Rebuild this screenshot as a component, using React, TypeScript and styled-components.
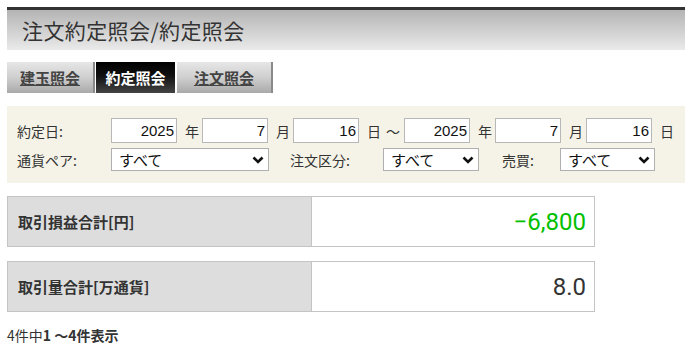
import * as React from 'react'
import styled, { createGlobalStyle } from 'styled-components'

const GlobalStyle = createGlobalStyle`
  body {
    margin: 0;
    background: #fff;
    font-family: "Liberation Sans", Arial, "Noto Sans CJK JP", sans-serif;
    color: #333;
  }
`

const Page = styled.div`
  padding: 7px 0 0 7px;
`

const Header = styled.h1`
  margin: 0;
  height: 40px;
  border-top: 3px solid #333;
  background: linear-gradient(to bottom, #b4b4b4, #eaeaea);
  padding-left: 15px;
  font-size: 21px;
  letter-spacing: 0.4px;
  font-weight: normal;
  line-height: 40px;
  color: #333;
  font-family: "Noto Sans CJK JP", sans-serif;
`

const Tabs = styled.ul`
  display: flex;
  list-style: none;
  margin: 12px 0 0;
  padding: 0;
  height: 31px;
`

const Tab = styled.li<{ active?: boolean; w: number }>`
  display: flex;
  align-items: center;
  justify-content: center;
  width: ${p => p.w}px;
  height: 31px;
  box-sizing: border-box;
  font-size: 15px;
  font-weight: bold;
  text-decoration: underline;
  font-family: "Noto Sans CJK JP", sans-serif;
  color: ${p => (p.active ? '#fff' : '#444')};
  background: ${p =>
    p.active
      ? 'linear-gradient(to bottom, #000 0%, #111 45%, #444 100%)'
      : 'linear-gradient(to bottom, #e6e6e6 0%, #cfcfcf 50%, #a9a9a9 100%)'};
  border-right: 2px solid ${p => (p.active ? '#fff' : '#8a8a8a')};
  ${p => p.active && 'text-decoration: none; border-left: 1px solid #fff;'}
`

const Filter = styled.div`
  margin-top: 13px;
  background: #f5f3e7;
  padding: 12px 0 12px 10px;
  display: flex;
  flex-direction: column;
  gap: 5px;
`

const Row = styled.div<{ h: number }>`
  display: flex;
  align-items: center;
  height: ${p => p.h}px;
`

const Label = styled.span<{ w: number }>`
  flex: none;
  width: ${p => p.w}px;
  font-size: 14px;
  color: #333;
  font-family: "Noto Sans CJK JP", sans-serif;
`

const NumInput = styled.input`
  flex: none;
  width: 66px;
  height: 25px;
  box-sizing: border-box;
  border: 1px solid #b8b8b8;
  background: #fff;
  text-align: right;
  padding: 0 2px;
  margin: 0;
  font-size: 15px;
  font-family: "Liberation Sans", Arial, sans-serif;
  color: #111;
`

const Unit = styled.span`
  flex: none;
  width: 14px;
  margin: 0 3px 0 8px;
  font-size: 14px;
  line-height: 1;
  color: #333;
  font-family: "Noto Sans CJK JP", sans-serif;
`

const Tilde = styled.span`
  flex: none;
  width: 14px;
  margin: 0 4px 0 2px;
  font-size: 14px;
  line-height: 1;
  font-family: "Noto Sans CJK JP", sans-serif;
`

const SelectBox = styled.div<{ w: number; gap?: number }>`
  flex: none;
  display: flex;
  align-items: center;
  justify-content: space-between;
  width: ${p => p.w}px;
  height: 23px;
  box-sizing: border-box;
  border: 1px solid #b0b0b0;
  background: #fff;
  padding: 0 4px 0 7px;
  margin-right: ${p => p.gap ?? 0}px;
  font-size: 15px;
  color: #111;
  font-family: "Noto Sans CJK JP", sans-serif;
`

const SumBox = styled.div<{ top: number }>`
  display: flex;
  width: 588px;
  height: 51px;
  box-sizing: border-box;
  margin-top: ${p => p.top}px;
  border: 1px solid #c4c4c4;
`

const SumLabel = styled.div`
  flex: none;
  width: 304px;
  box-sizing: border-box;
  background: #dddddd;
  border-right: 1px solid #c4c4c4;
  display: flex;
  align-items: center;
  padding-left: 10px;
  font-size: 15px;
  font-weight: bold;
  color: #333;
  font-family: "Noto Sans CJK JP", sans-serif;
`

const SumValue = styled.div<{ color: string }>`
  flex: 1;
  display: flex;
  align-items: center;
  justify-content: flex-end;
  padding-right: 8px;
  font-size: 24px;
  font-family: Roboto, "Liberation Sans", sans-serif;
  color: ${p => p.color};
`

const Footer = styled.p`
  margin: 13px 0 0;
  font-size: 14px;
  color: #333;
  font-family: "Noto Sans CJK JP", sans-serif;
  b { font-weight: bold; }
`

const Chevron = () => (
  <svg width="12" height="8" viewBox="0 0 12 8">
    <path d="M1.5 1.5 L6 6 L10.5 1.5" fill="none" stroke="#111" strokeWidth="2.6" />
  </svg>
)

const Select = ({ w, gap }: { w: number; gap?: number }) => (
  <SelectBox w={w} gap={gap}>
    <span>すべて</span>
    <Chevron />
  </SelectBox>
)

const App = () => (
  <Page>
    <GlobalStyle />
    <Header>注文約定照会/約定照会</Header>
    <Tabs>
      <Tab w={88}>建玉照会</Tab>
      <Tab w={82} active>約定照会</Tab>
      <Tab w={96}>注文照会</Tab>
    </Tabs>
    <Filter>
      <Row h={25}>
        <Label w={94}>約定日:</Label>
        <NumInput defaultValue="2025" />
        <Unit>年</Unit>
        <NumInput defaultValue="7" />
        <Unit>月</Unit>
        <NumInput defaultValue="16" />
        <Unit>日</Unit>
        <Tilde>〜</Tilde>
        <NumInput defaultValue="2025" />
        <Unit>年</Unit>
        <NumInput defaultValue="7" />
        <Unit>月</Unit>
        <NumInput defaultValue="16" />
        <Unit>日</Unit>
      </Row>
      <Row h={23}>
        <Label w={94}>通貨ペア:</Label>
        <Select w={158} gap={21} />
        <Label w={93}>注文区分:</Label>
        <Select w={96} gap={23} />
        <Label w={58}>売買:</Label>
        <Select w={95} />
      </Row>
    </Filter>
    <SumBox top={13}>
      <SumLabel>取引損益合計[円]</SumLabel>
      <SumValue color="#00c000">−6,800</SumValue>
    </SumBox>
    <SumBox top={14}>
      <SumLabel>取引量合計[万通貨]</SumLabel>
      <SumValue color="#333">8.0</SumValue>
    </SumBox>
    <Footer>4件中<b>1 〜4件表示</b></Footer>
  </Page>
)

export default App
